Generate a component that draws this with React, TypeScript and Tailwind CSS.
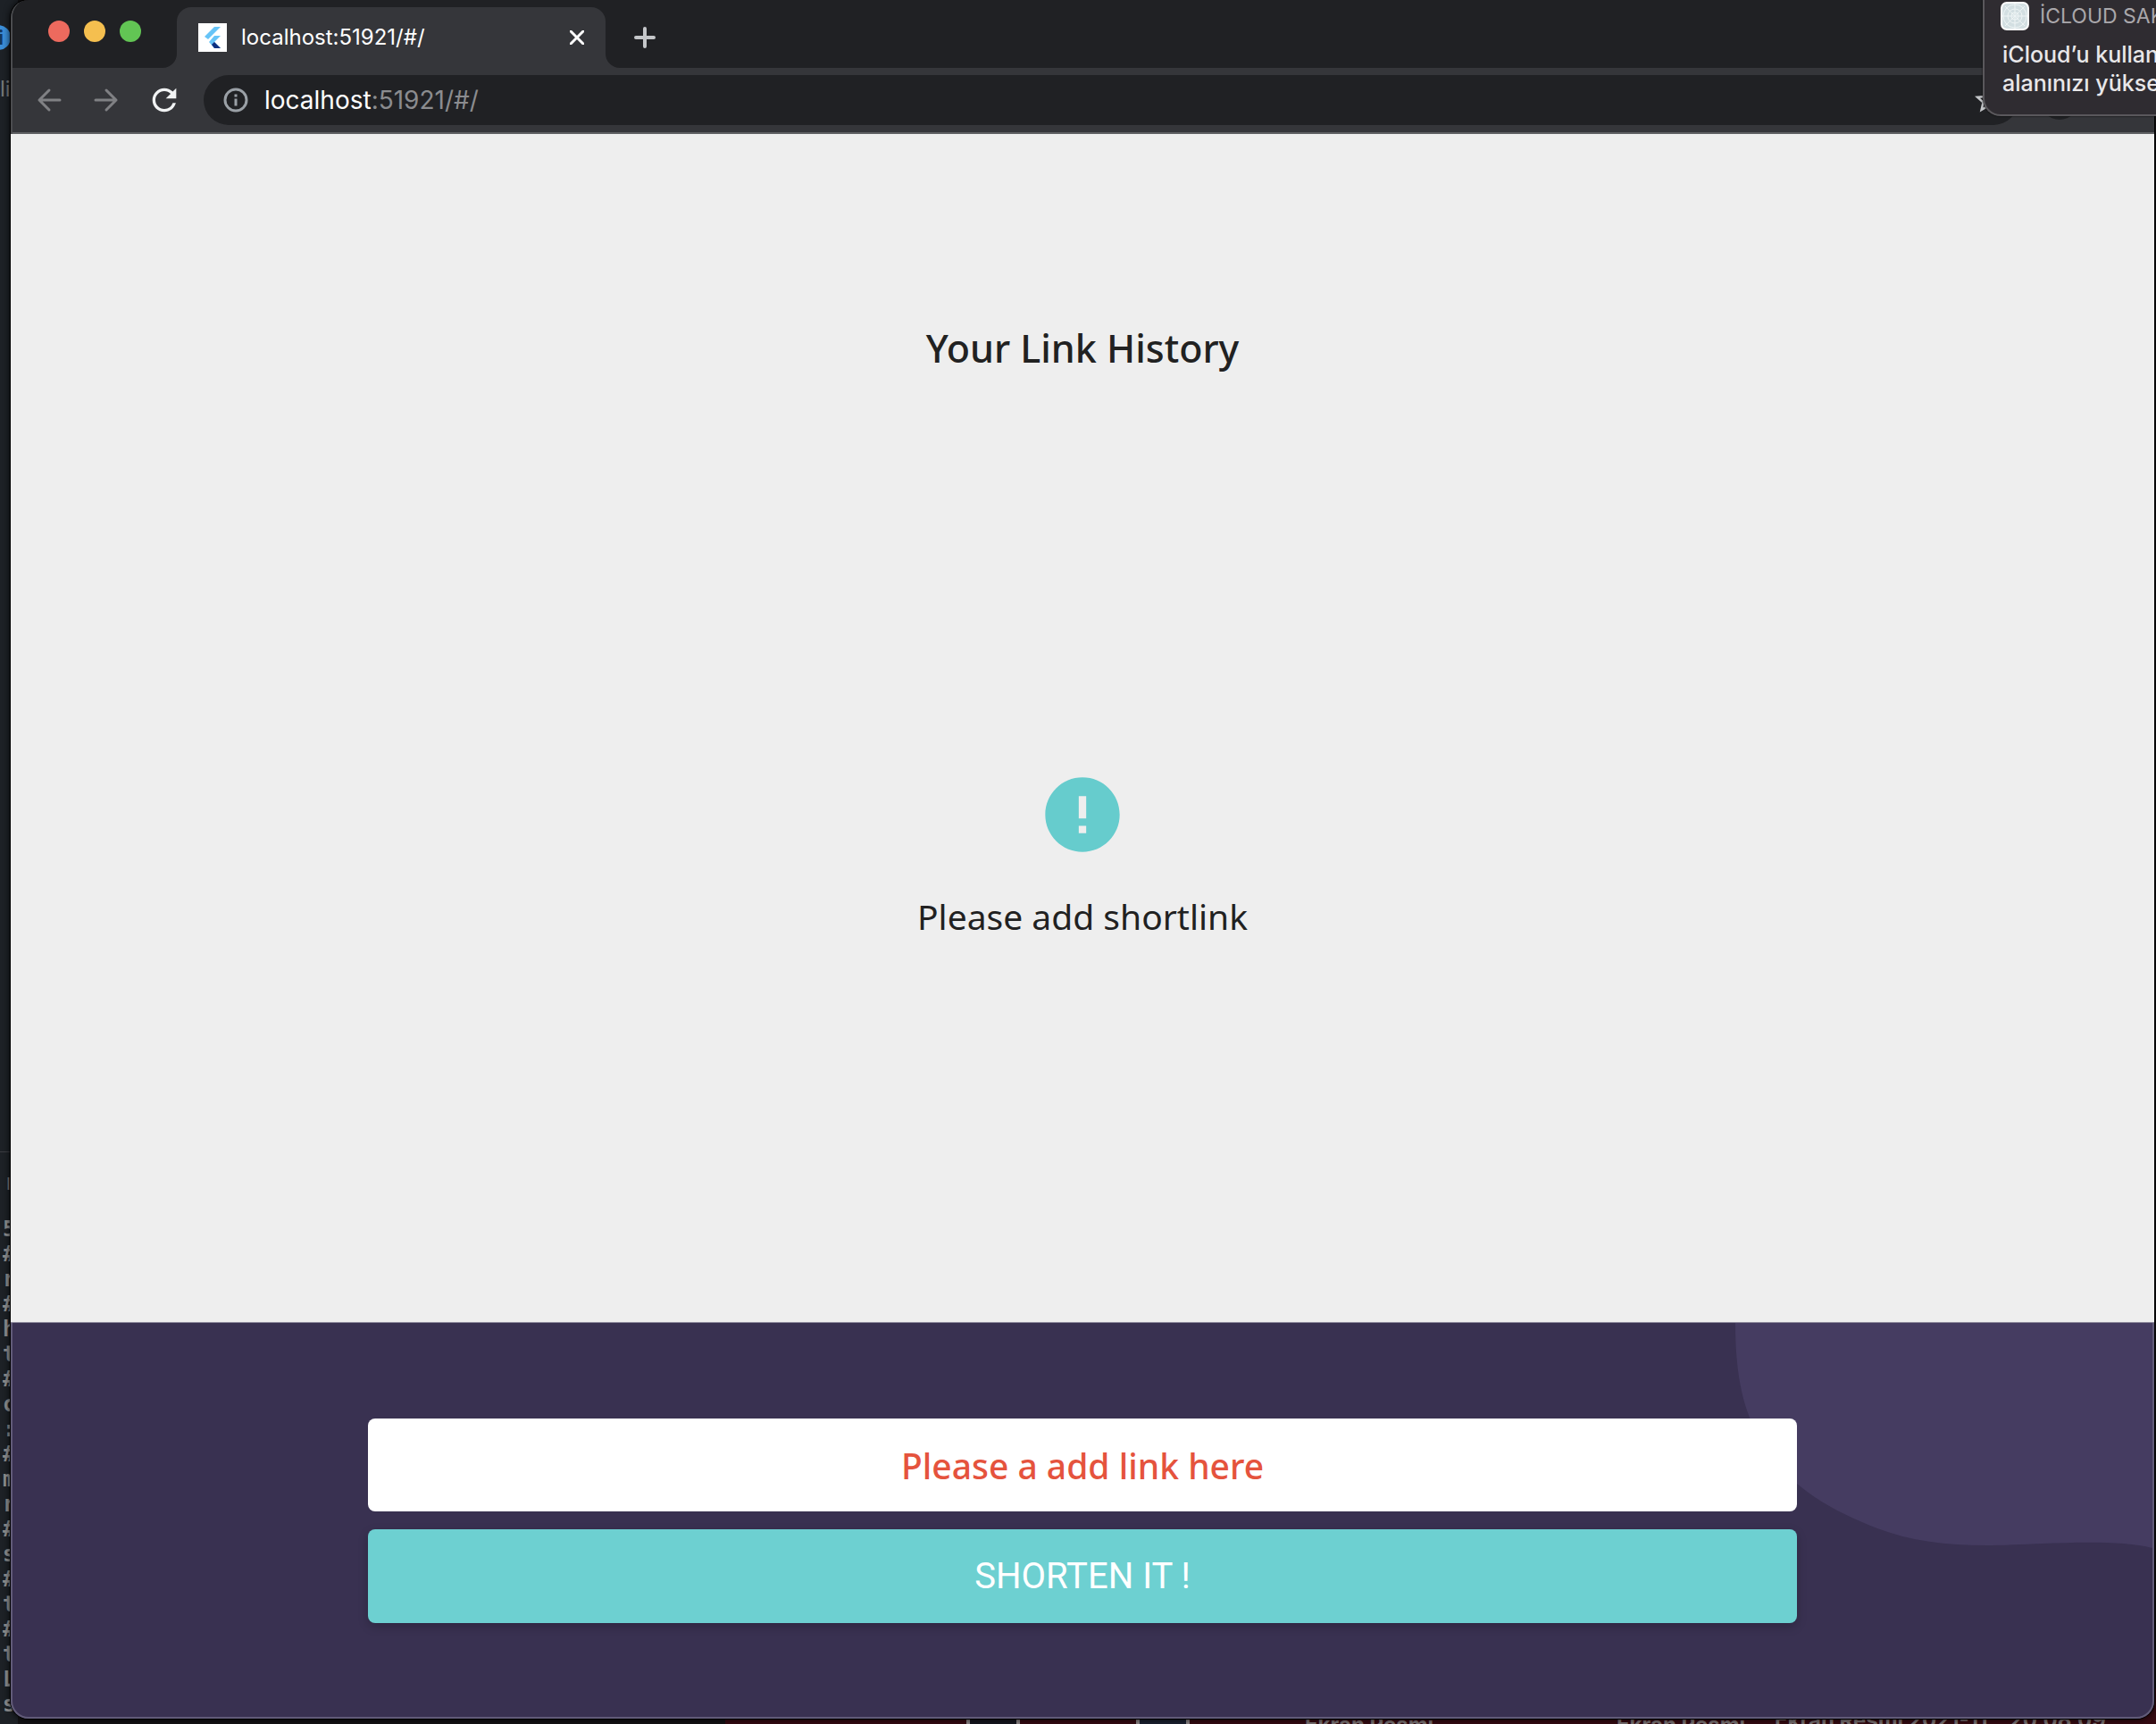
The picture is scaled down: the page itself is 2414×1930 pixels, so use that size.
import React from "react";
import { MdError, MdRefresh, MdStarBorder } from "react-icons/md";

const terminalLines = ["5", "#", "r", "#", "h", "t", "#", "c", ":", "#", "m", "r", "#", "s", "#", "t", "#", "t", "L", "s"];

function EditorBehind() {
  return (
    <div aria-hidden="true" className="absolute inset-y-0 left-0 w-5 overflow-hidden bg-[#1d2126]">
      <div className="mt-7 -ml-4 flex h-7 w-7 items-center justify-end rounded-full bg-[#3b8ed8] pr-2 font-['Inter',sans-serif] text-[22px] font-bold text-[#14385c]">
        i
      </div>
      <div className="mt-6 font-['Inter',sans-serif] text-[24px] leading-10 text-[#77787a]">li</div>
      <div className="mt-[1169px] border-t border-[#3c3d42] pt-6 pl-[7px] font-['Inter',sans-serif] text-[18px] leading-6 text-[#77787a]">
        I
      </div>
      <pre className="mt-6 pl-[3px] font-['DejaVu_Sans_Mono',monospace] text-[24px] leading-7 font-bold text-[#8f8f8f]">
        {terminalLines.join("\n")}
      </pre>
    </div>
  );
}

function DesktopBehind() {
  return (
    <div
      aria-hidden="true"
      className="absolute right-0 bottom-0 left-[812px] h-10 overflow-hidden bg-[#350a12] font-['Inter',sans-serif] text-[24px] leading-6 font-bold text-[#7d7476]"
    >
      <div className="absolute top-0 left-[270px] h-10 w-[60px] border-x-4 border-[#8d8688] bg-[#15161f]" />
      <div className="absolute top-0 left-[460px] h-10 w-[60px] border-x-4 border-[#8d8688] bg-[#1a2030]" />
      <div className="absolute top-[29px] left-[649px]">Ekran Resmi</div>
      <div className="absolute top-[29px] left-[998px]">Ekran Resmi</div>
      <div className="absolute top-[24px] left-[1175px] whitespace-nowrap">Ekran Resmi 2021-11...20.08.09</div>
    </div>
  );
}

function FlutterIcon() {
  return (
    <svg viewBox="0 0 32 32" className="h-8 w-8 shrink-0 bg-white" aria-hidden="true">
      <path d="M18 4h7L11 18l-4-3z" fill="#67c4f7" />
      <path d="M18 14h7l-7 7 7 7h-7l-6-7z" fill="#67c4f7" />
      <path d="M15 24l3-3 7 7h-7z" fill="#0d2f80" />
    </svg>
  );
}

function TabStrip() {
  return (
    <div className="flex h-[76px] items-end bg-[#202124] pl-10">
      <div className="mb-[29px] flex gap-4">
        <button aria-label="Close window" className="h-6 w-6 rounded-full bg-[#ed6a5e]" />
        <button aria-label="Minimize window" className="h-6 w-6 rounded-full bg-[#f5bf4f]" />
        <button aria-label="Zoom window" className="h-6 w-6 rounded-full bg-[#62c554]" />
      </div>
      <svg viewBox="0 0 16 16" className="ml-6 h-4 w-4 text-[#35363a]" aria-hidden="true">
        <path d="M16 0v16H0A16 16 0 0 0 16 0z" fill="currentColor" />
      </svg>
      <div className="flex h-[68px] w-[480px] items-center rounded-t-2xl bg-[#35363a] pr-6 pl-6">
        <FlutterIcon />
        <span className="ml-4 flex-1 font-['Inter',sans-serif] text-[24px] leading-8 text-white">localhost:51921/#/</span>
        <button aria-label="Close tab" className="text-white">
          <svg viewBox="0 0 16 16" className="h-4 w-4" stroke="currentColor" strokeWidth="3" strokeLinecap="round">
            <path d="M1 1l14 14M15 1L1 15" />
          </svg>
        </button>
      </div>
      <svg viewBox="0 0 16 16" className="h-4 w-4 text-[#35363a]" aria-hidden="true">
        <path d="M0 0v16h16A16 16 0 0 1 0 0z" fill="currentColor" />
      </svg>
      <button aria-label="New tab" className="mb-[22px] ml-4 text-[#c4c6c9]">
        <svg viewBox="0 0 24 24" className="h-6 w-6" stroke="currentColor" strokeWidth="4" strokeLinecap="round">
          <path d="M12 2v20M2 12h20" />
        </svg>
      </button>
    </div>
  );
}

function Toolbar() {
  return (
    <div className="flex h-[74px] items-center border-b-2 border-[#5f6063] bg-[#35363a] pr-[84px] pl-[27px]">
      <button aria-label="Back" className="text-[#808184]">
        <svg viewBox="0 0 28 28" className="h-7 w-7" fill="none" stroke="currentColor" strokeWidth="3" strokeLinecap="round" strokeLinejoin="round">
          <path d="M26 14H3M14 3L3 14l11 11" />
        </svg>
      </button>
      <button aria-label="Forward" className="ml-9 text-[#808184]">
        <svg viewBox="0 0 28 28" className="h-7 w-7" fill="none" stroke="currentColor" strokeWidth="3" strokeLinecap="round" strokeLinejoin="round">
          <path d="M2 14h23M14 3l11 11-11 11" />
        </svg>
      </button>
      <button aria-label="Reload" className="ml-[31px] text-[#f1f3f4]">
        <MdRefresh className="h-10 w-10" />
      </button>
      <div className="ml-6 flex h-14 flex-1 items-center rounded-full bg-[#202124] pr-4 pl-[22px]">
        <svg viewBox="0 0 28 28" className="h-7 w-7 shrink-0 text-[#9aa0a6]" fill="none" stroke="currentColor" strokeWidth="3" aria-hidden="true">
          <circle cx="14" cy="14" r="12" />
          <path d="M14 12.500v8M14 7.500v3" />
        </svg>
        <div className="ml-[18px] flex-1 font-['Inter',sans-serif] text-[28px] leading-9 text-[#8b8c8f]">
          <span className="text-white">localhost</span>:51921/#/
        </div>
        <button aria-label="Bookmark this tab" className="text-[#c4c6c9]">
          <MdStarBorder className="h-9 w-9" />
        </button>
      </div>
      <button aria-label="Profile" className="ml-6 h-11 w-11 rounded-full bg-[#202124]" />
    </div>
  );
}

function Notification() {
  return (
    <aside className="absolute top-0 right-0 z-20 h-[130px] w-[194px] overflow-hidden rounded-bl-[20px] border-b-2 border-l-2 border-[#5a585c] bg-[#2f2c31] pt-[2px] pl-[18px] font-['Inter',sans-serif] whitespace-nowrap shadow-[0_0_2px_#000]">
      <div className="flex items-center gap-3">
        <svg viewBox="0 0 32 32" className="h-8 w-8 shrink-0" aria-hidden="true">
          <rect width="32" height="32" rx="7" fill="#fff" />
          <rect x="2" y="2" width="28" height="28" rx="5" fill="#d3dfe2" />
          <g fill="none" stroke="#eef4f5">
            <circle cx="16" cy="16" r="13" />
            <circle cx="16" cy="16" r="8" />
            <circle cx="16" cy="16" r="4" />
            <path d="M16 2v28M2 16h28M5 5l22 22M27 5L5 27" />
          </g>
        </svg>
        <span className="text-[23px] leading-8 text-[#a9a7ab]">İCLOUD SAKLAMA</span>
      </div>
      <p className="mt-[11px] ml-[2px] text-[25px] leading-8 font-medium text-[#e8e7e9]">
        iCloud’u kullanmak için
        <br />
        alanınızı yükseltin
      </p>
    </aside>
  );
}

function LinkHistory() {
  return (
    <main className="flex flex-1 flex-col items-center bg-[#eeeeee] text-[#212121]">
      <h1 className="mt-[208px] text-[43px] leading-[64px] font-medium">Your Link History</h1>
      <MdError className="mt-[440px] h-[100px] w-[100px] text-[#66cccd]" />
      <p className="mt-9 text-[39px] leading-[56px]">Please add shortlink</p>
    </main>
  );
}

function ShortenForm() {
  return (
    <form
      onSubmit={(e) => e.preventDefault()}
      className="relative flex h-[444px] flex-col items-center gap-5 overflow-hidden rounded-b-[20px] border-t border-[#8b879a] bg-[#393151] pt-[107px] shadow-[inset_0_0_0_2px_#615b78]"
    >
      <div className="absolute inset-x-[2px] top-0 h-[2px] bg-[#393151]" />
      <svg viewBox="0 0 476 254" className="absolute top-0 right-[2px] h-[254px] w-[476px] text-[#453c61]" aria-hidden="true">
        <path
          d="M9 0C9 45 14 78 25 106C36 138 54 160 78 180C104 202 134 217 168 230C205 244 245 249 290 249C340 249 430 240 476 252V0z"
          fill="currentColor"
        />
      </svg>
      <input
        aria-label="Link to shorten"
        placeholder="Please a add link here"
        className="relative h-[104px] w-2/3 rounded-lg bg-white text-center text-[39px] font-medium text-[#e5533d] outline-none placeholder:text-[#e5533d] placeholder:opacity-100"
      />
      <button
        type="submit"
        className="relative h-[105px] w-2/3 rounded-lg bg-[#6dd0d1] font-['Roboto',sans-serif] text-[40px] text-white shadow-[0_4px_12px_rgba(0,0,0,0.2)]"
      >
        SHORTEN IT !
      </button>
    </form>
  );
}

export default function App() {
  return (
    <div className="relative flex min-h-screen flex-col overflow-hidden bg-[#131215] font-['Noto_Sans',sans-serif]">
      <EditorBehind />
      <DesktopBehind />
      <div className="relative mr-[2px] mb-[6px] ml-3 flex flex-1 flex-col rounded-t-[20px] rounded-b-[20px] shadow-[0_0_0_1px_#000,0_0_8px_#000]">
        <div className="overflow-hidden rounded-tl-[20px] border-l-2 border-[#4b4c4f]">
          <TabStrip />
          <Toolbar />
        </div>
        <LinkHistory />
        <ShortenForm />
      </div>
      <Notification />
    </div>
  );
}
